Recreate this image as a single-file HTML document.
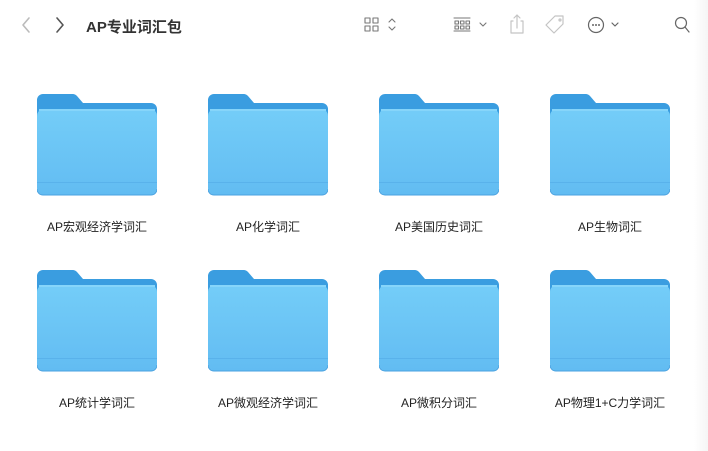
<!DOCTYPE html><html><head><meta charset="utf-8"><style>
body{margin:0;width:708px;height:451px;background:#fff;position:relative;overflow:hidden;font-family:"Liberation Sans","Noto Sans CJK SC",sans-serif}
.t{position:absolute;top:16px;left:86px;font-size:15px;font-weight:bold;color:#333}
.f{position:absolute;width:120px;height:102px}
.lbl{position:absolute;width:170px;text-align:center;font-size:12px;color:#222}
.ic{position:absolute}
</style></head><body>
<svg class="ic" style="left:0;top:0" width="708" height="50">
<g fill="none" stroke-linecap="round" stroke-linejoin="round">
<path d="M29 18l-6 7 6 7" stroke="#bbb" stroke-width="1.6"/>
<path d="M57 18l6 7-6 7" stroke="#555" stroke-width="1.6"/>
<g stroke="#777" stroke-width="1.1"><rect x="365" y="18" width="5" height="5"/><rect x="373" y="18" width="5" height="5"/><rect x="365" y="26" width="5" height="5"/><rect x="373" y="26" width="5" height="5"/>
<path d="M389 22l3-3 3 3M389 27l3 3 3-3"/>
<path d="M454 18h16M454 31h16"/><rect x="455" y="21" width="3.5" height="3"/><rect x="460.5" y="21" width="3.5" height="3"/><rect x="466" y="21" width="3.5" height="3"/><rect x="455" y="26" width="3.5" height="3"/><rect x="460.5" y="26" width="3.5" height="3"/><rect x="466" y="26" width="3.5" height="3"/>
<path d="M480 23l3 3 3-3"/></g>
<g stroke="#c4c4c4" stroke-width="1.2"><path d="M513 21h-2v12h12v-12h-2M517 28v-13M514 18l3-3 3 3"/>
<path d="M555 16h8v8l-9 9-8-8z"/><circle cx="560" cy="20" r="1"/></g>
<g stroke="#666" stroke-width="1.2"><circle cx="596" cy="25" r="7.5"/><path d="M612 23l3 3 3-3"/>
<circle cx="681" cy="23" r="5.5"/><path d="M685 27l4 5"/></g>
</g>
<g fill="#666"><circle cx="593" cy="25" r="1"/><circle cx="596" cy="25" r="1"/><circle cx="599" cy="25" r="1"/></g>
</svg>
<div class="t">AP专业词汇包</div>
<svg width="0" height="0" style="position:absolute"><defs>
<linearGradient id="g" x1="0" y1="0" x2="0" y2="1"><stop offset="0" stop-color="#74cdf8"/><stop offset="1" stop-color="#62bcf2"/></linearGradient>
<symbol id="fo" viewBox="0 0 120 102">
<path d="M0 6a6 6 0 0 1 6-6h29a6 6 0 0 1 5 2l6 7h68a6 6 0 0 1 6 6v20h-120z" fill="#3a9de0"/>
<rect x="0" y="15" width="120" height="86" rx="7" fill="url(#g)"/>
<rect x="2" y="15" width="116" height="2" fill="#86d5fa"/>
<rect x="0" y="88" width="120" height="1" fill="#59b2eb"/>
<path d="M0 95a6 6 0 0 0 6 6h108a6 6 0 0 0 6-6" stroke="#4aa2e0" fill="none"/>
</symbol></defs></svg>
<svg class="f" style="left:37px;top:94px"><use href="#fo"/></svg>
<svg class="f" style="left:208px;top:94px"><use href="#fo"/></svg>
<svg class="f" style="left:379px;top:94px"><use href="#fo"/></svg>
<svg class="f" style="left:550px;top:94px"><use href="#fo"/></svg>
<svg class="f" style="left:37px;top:270px"><use href="#fo"/></svg>
<svg class="f" style="left:208px;top:270px"><use href="#fo"/></svg>
<svg class="f" style="left:379px;top:270px"><use href="#fo"/></svg>
<svg class="f" style="left:550px;top:270px"><use href="#fo"/></svg>
<div class="lbl" style="left:12px;top:218px">AP宏观经济学词汇</div>
<div class="lbl" style="left:183px;top:218px">AP化学词汇</div>
<div class="lbl" style="left:354px;top:218px">AP美国历史词汇</div>
<div class="lbl" style="left:525px;top:218px">AP生物词汇</div>
<div class="lbl" style="left:12px;top:394px">AP统计学词汇</div>
<div class="lbl" style="left:183px;top:394px">AP微观经济学词汇</div>
<div class="lbl" style="left:354px;top:394px">AP微积分词汇</div>
<div class="lbl" style="left:525px;top:394px">AP物理1+C力学词汇</div>
<div style="position:absolute;right:0;top:0;width:14px;height:451px;background:linear-gradient(90deg,#fff,#f5f5f5)"></div>
</body></html>
